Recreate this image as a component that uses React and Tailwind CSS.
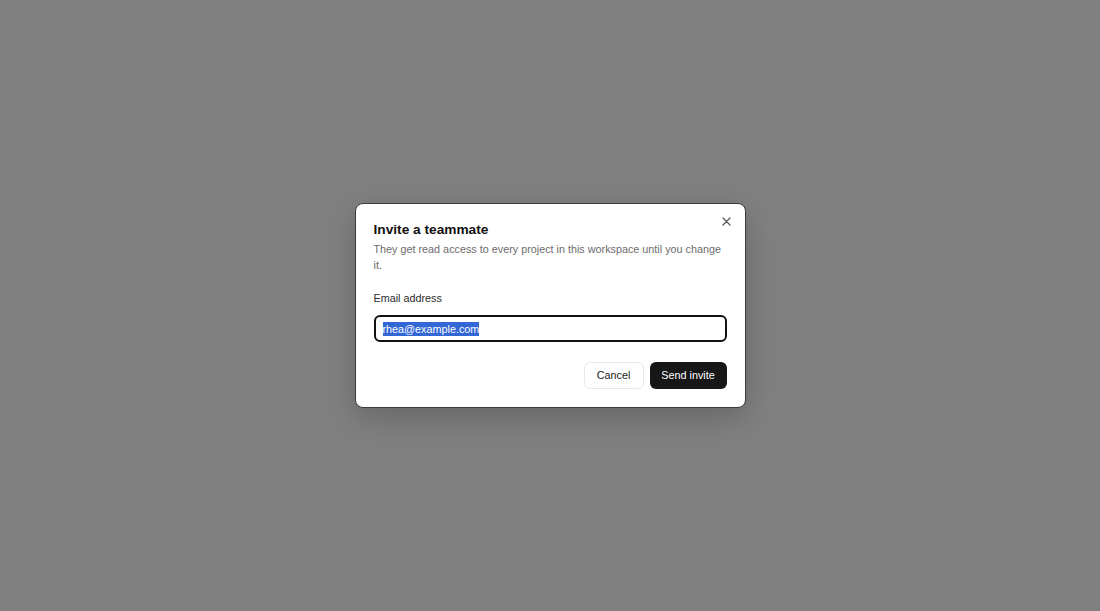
// Invite teammate modal over a dimmed backdrop.

export default function App() {
  return (
    <div
      className="flex h-[611px] w-full items-center justify-center bg-[#808080]"
      style={{ fontFamily: '"Liberation Sans", Arial, sans-serif' }}
    >
      <div className="relative w-[391px] rounded-[8px] border border-[#3a3a3a] bg-white px-[18px] pb-[18px] pt-[16px] shadow-[0_10px_30px_rgba(0,0,0,0.2)]">
        <button className="absolute right-[10px] top-[9px] flex h-[16px] w-[16px] items-center justify-center text-[#555]">
          <svg width="9" height="9" viewBox="0 0 9 9" fill="none" stroke="currentColor" strokeWidth="1.2" strokeLinecap="round">
            <path d="M1 1l7 7M8 1l-7 7" />
          </svg>
        </button>
        <h2 className="text-[13.7px] font-bold leading-[20px] text-[#111]">Invite a teammate</h2>
        <p className="mt-[0.5px] text-[10.8px] leading-[16px] text-[#6b6b6b]">
          They get read access to every project in this workspace until you change it.
        </p>
        <div className="mt-[17px] text-[10.8px] leading-[16px] text-[#2b2b2b]">Email address</div>
        <div className="mt-[9.5px] flex h-[27px] items-center rounded-[6px] border-2 border-[#111] px-[7px]">
          <span className="bg-[#3367d6] text-[10.8px] leading-[14px] text-white">rhea@example.com</span>
        </div>
        <div className="mt-[20px] flex justify-end gap-[6px]">
          <button className="h-[27px] w-[60px] rounded-[6px] border border-[#e8e8e8] bg-white text-[10.8px] text-[#222]">
            Cancel
          </button>
          <button className="h-[27px] w-[77px] rounded-[6px] bg-[#171717] text-[10.8px] text-white">
            Send invite
          </button>
        </div>
      </div>
    </div>
  )
}
